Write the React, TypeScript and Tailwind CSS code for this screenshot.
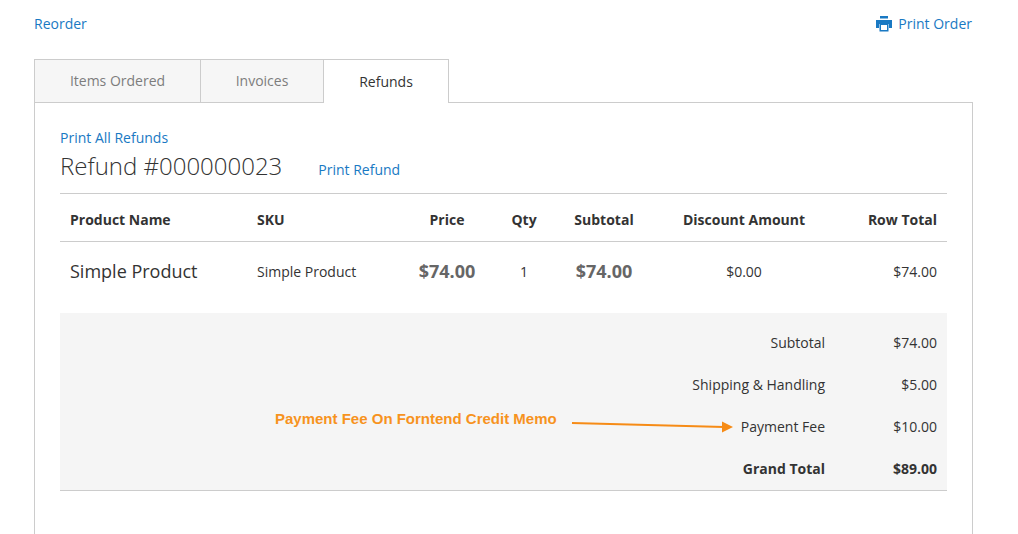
const tabs = [
  { label: "Items Ordered", w: "w-[166px]" },
  { label: "Invoices", w: "w-[123px]" },
];

const totals = [
  { label: "Subtotal", value: "$74.00" },
  { label: "Shipping & Handling", value: "$5.00" },
  { label: "Payment Fee", value: "$10.00" },
];

const PrinterIcon = () => (
  <svg width="16" height="16" viewBox="0 0 16 16" className="mr-[6px] text-[#1979c3]" fill="currentColor">
    <path d="M4 0h8v2.5H4z" />
    <path d="M0 4h16v8h-3V8H3v4H0z" />
    <path d="M3.5 7.5h9V15.5h-9zM5 9v5h6V9z" fillRule="evenodd" />
  </svg>
);

const App = () => {
  return (
    <div className="w-[1018px] h-[534px] overflow-hidden bg-white font-['Open_Sans',sans-serif] text-sm text-[#333]">
      {/* Top actions */}
      <div className="flex items-center justify-between h-[59px] pl-[34px] pr-[46px] pb-[11px] text-[#1979c3]">
        <a>Reorder</a>
        <a className="flex items-center">
          <PrinterIcon />
          Print Order
        </a>
      </div>

      {/* Tabs */}
      <div className="flex h-[44px] ml-[34px] w-[938px] relative z-10">
        {tabs.map((t) => (
          <div
            key={t.label}
            className={`${t.w} h-[44px] flex items-center justify-center bg-[#f6f6f6] border border-r-0 border-[#cccccc] text-[#7d7d7d]`}
          >
            {t.label}
          </div>
        ))}
        <div className="w-[126px] h-[44px] flex items-center justify-center bg-white border border-b-0 border-[#cccccc] text-[#333]">
          Refunds
        </div>
      </div>

      {/* Panel */}
      <div className="ml-[34px] w-[939px] h-[440px] -mt-px border border-[#cccccc] bg-white px-[25px] pt-[25px]">
        <a className="block h-[19px] leading-[19px] text-[#1979c3]">Print All Refunds</a>
        <div className="flex items-end h-[37px]">
          <h2 className="font-light text-[24px] leading-[36px] text-[#333]">Refund #000000023</h2>
          <a className="ml-[36px] leading-[19px] mb-[5px] text-[#1979c3]">Print Refund</a>
        </div>

        <table className="w-[887px] table-fixed mt-[9px] border-collapse">
          <thead>
            <tr className="border-y border-[#cccccc] h-[48px] font-bold">
              <th className="w-[187px] pl-[10px] pt-[5px] text-left">Product Name</th>
              <th className="w-[153px] pl-[10px] pt-[5px] text-left">SKU</th>
              <th className="w-[94px] pt-[5px] text-center">Price</th>
              <th className="w-[60px] pt-[5px] text-center">Qty</th>
              <th className="w-[100px] pt-[5px] text-center">Subtotal</th>
              <th className="w-[180px] pt-[5px] text-center">Discount Amount</th>
              <th className="pr-[10px] pt-[5px] text-right">Row Total</th>
            </tr>
          </thead>
          <tbody>
            <tr className="h-[71px]">
              <td className="pl-[10px] pb-[11px] text-[18px] font-normal">Simple Product</td>
              <td className="pl-[10px] pb-[10px]">Simple Product</td>
              <td className="pb-[10px] text-center text-[18px] font-bold text-[#666]">$74.00</td>
              <td className="pb-[10px] text-center">1</td>
              <td className="pb-[10px] text-center text-[18px] font-bold text-[#666]">$74.00</td>
              <td className="pb-[10px] text-center">$0.00</td>
              <td className="pr-[10px] pb-[10px] text-right">$74.00</td>
            </tr>
          </tbody>
        </table>

        {/* Totals */}
        <div className="relative w-[887px] h-[178px] pt-[9px] bg-[#f5f5f5] border-b border-[#cccccc]">
          {totals.map((row) => (
            <div key={row.label} className="flex justify-end items-center h-[42px]">
              <span className="mr-[68px]">{row.label}</span>
              <span className="w-[44px] mr-[10px] whitespace-nowrap flex justify-end">{row.value}</span>
            </div>
          ))}
          <div className="flex justify-end items-center h-[42px] font-bold">
            <span className="mr-[68px]">Grand Total</span>
            <span className="w-[44px] mr-[10px] flex justify-end">$89.00</span>
          </div>

          {/* Annotation over the totals */}
          <span className="absolute left-[215px] top-[96px] leading-[20px] font-['Liberation_Sans',sans-serif] text-[15px] font-bold text-[#f7931e] whitespace-nowrap">
            Payment Fee On Forntend Credit Memo
          </span>
          <svg className="absolute left-[510px] top-[101px]" width="166" height="24" viewBox="0 0 166 24">
            <path d="M2 9 L154 13" stroke="#f68b16" strokeWidth="1.8" fill="none" />
            <path d="M152 7.5 L163 13 L152 18.5 Z" fill="#f68b16" />
          </svg>
        </div>
      </div>
    </div>
  );
};

export default App;
